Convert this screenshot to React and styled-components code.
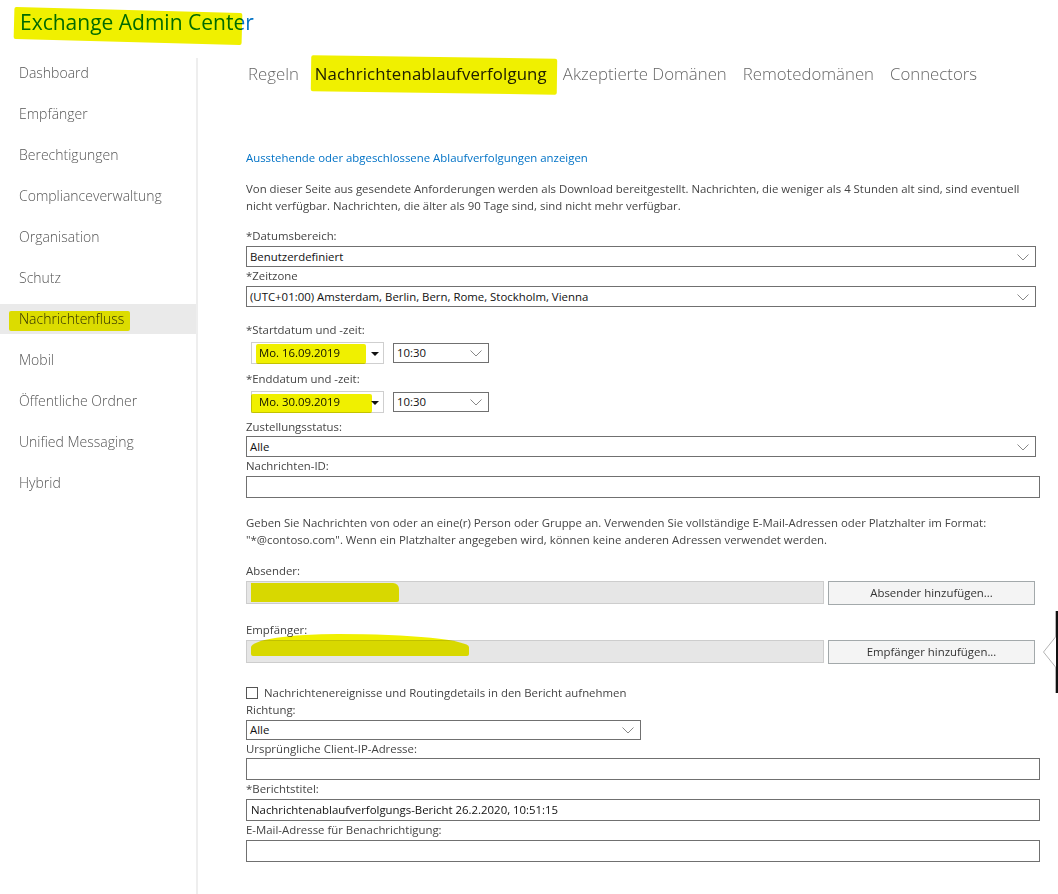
import React from "react";
import styled, { createGlobalStyle } from "styled-components";

const GlobalStyle = createGlobalStyle`
  body {
    margin: 0;
    background: #fff;
    font-family: "Segoe UI", "Open Sans", "Noto Sans", sans-serif;
    color: #333;
  }
`;

const Page = styled.div`
  width: 1058px;
  height: 894px;
  position: relative;
  overflow: hidden;
`;

const Header = styled.header`
  height: 58px;
  padding-left: 20px;
  box-sizing: border-box;
`;

const Title = styled.h1`
  margin: 0;
  padding-top: 6px;
  font-size: 21px;
  font-weight: 400;
  line-height: 32px;
  color: #0072c6;
`;

/* yellow marker stroke laid over text with multiply, like a highlighter pen */
const Marker = styled.span`
  position: relative;
  display: inline-block;

  &::after {
    content: "";
    position: absolute;
    left: ${(p) => p.$l ?? -4}px;
    right: ${(p) => p.$r ?? -4}px;
    top: ${(p) => p.$t ?? 2}px;
    bottom: ${(p) => p.$b ?? 0}px;
    background: #f0f000;
    mix-blend-mode: multiply;
    transform: rotate(${(p) => p.$tilt ?? 0}deg);
    border-radius: 2px;
    pointer-events: none;
  }
`;

const Body = styled.div`
  display: flex;
`;

const Sidebar = styled.nav`
  width: 198px;
  height: 836px;
  border-right: 2px solid #eeeeee;
  box-sizing: border-box;
`;

const NavItem = styled.div`
  height: 30px;
  line-height: 30px;
  margin-bottom: 11px;
  padding-left: 19px;
  font-size: 14px;
  font-weight: 300;
  background: ${(p) => (p.$active ? "#eaeaea" : "transparent")};
  color: ${(p) => (p.$active ? "#333" : "#555")};
`;

const Main = styled.main`
  flex: 1;
  padding-left: 48px;
  padding-right: 18px;
`;

const Tabs = styled.div`
  display: flex;
  gap: 16px;
  height: 30px;
  align-items: center;
  margin-left: 2px;
`;

const Tab = styled.div`
  font-size: 16.8px;
  font-weight: ${(p) => (p.$active ? 400 : 300)};
  letter-spacing: ${(p) => (p.$active ? "0.15px" : "0")};
  color: ${(p) => (p.$active ? "#222" : "#666")};
  white-space: nowrap;
`;

const Link = styled.a`
  display: block;
  margin-top: 61px;
  font-size: 11.4px;
  line-height: 17px;
  color: #0072c6;
  text-decoration: none;
`;

const Note = styled.p`
  margin: ${(p) => p.$top}px 0 0;
  font-size: 11.4px;
  line-height: 17px;
  color: #444;
`;

const Label = styled.div`
  margin-top: ${(p) => p.$top ?? 0}px;
  font-size: 11.4px;
  line-height: 17px;
  color: #444;
  margin-bottom: ${(p) => p.$gap ?? 2}px;
`;

const Select = styled.div`
  position: relative;
  width: ${(p) => p.$w ?? "790px"};
  height: ${(p) => p.$h ?? 21}px;
  box-sizing: border-box;
  border: 1px solid #707070;
  padding-left: 3px;
  font-size: 11.4px;
  line-height: ${(p) => (p.$h ?? 21) - 2}px;
  color: #111;
  background: #fff;
`;

const Chevron = styled.svg`
  position: absolute;
  right: 6px;
  top: 50%;
  margin-top: -3px;
`;

const TextBox = styled.div`
  width: 794px;
  height: 22px;
  box-sizing: border-box;
  border: 1px solid #707070;
  padding-left: ${(p) => p.$pad ?? 7}px;
  font-size: 11.4px;
  line-height: 20px;
  color: #111;
`;

const Row = styled.div`
  display: flex;
  align-items: center;
  height: 23px;
  gap: ${(p) => p.$gap ?? 9}px;
`;

const DateBox = styled.div`
  position: relative;
  width: 133px;
  height: 22px;
  margin-left: 5px;
  box-sizing: border-box;
  border: 1px solid #cfcfcf;
  padding-left: 7px;
  font-size: 11.4px;
  line-height: 20px;
  color: #111;
`;

const Caret = styled.span`
  position: absolute;
  right: 4px;
  top: 9px;
  width: 0;
  height: 0;
  border-left: 4px solid transparent;
  border-right: 4px solid transparent;
  border-top: 4px solid #111;
`;

const PeopleBox = styled.div`
  width: 578px;
  height: 23px;
  box-sizing: border-box;
  border: 1px solid #cdcdcd;
  background: #e6e6e6;
  padding: 2px 0 0 4px;
`;

const Blot = styled.div`
  width: ${(p) => p.$w}px;
  height: ${(p) => p.$h ?? 20}px;
  margin-top: ${(p) => p.$y ?? 0}px;
  background: #f0f000;
  mix-blend-mode: multiply;
  border-radius: ${(p) => p.$radius ?? "2px"};
`;

const Button = styled.button`
  width: 207px;
  height: 24px;
  margin-left: 4px;
  border: 1px solid #a3a9ab;
  background: #f4f4f4;
  font-family: inherit;
  font-size: 11.4px;
  color: #333;
  padding: 0;
`;

const CheckRow = styled.label`
  display: flex;
  align-items: center;
  gap: 6px;
  margin-top: 21px;
  height: 17px;
  font-size: 11.4px;
  color: #444;
`;

const Box = styled.span`
  width: 12px;
  height: 12px;
  box-sizing: border-box;
  border: 1px solid #555;
  background: #fff;
`;

const Callout = styled.div`
  position: absolute;
  left: 1043px;
  top: 611px;
  width: 15px;
  height: 82px;
`;

const ChevronDown = () => (
  <Chevron width="12" height="7" viewBox="0 0 12 7">
    <polyline points="0.5,0.5 6,6 11.5,0.5" fill="none" stroke="#888" strokeWidth="1" />
  </Chevron>
);

const NAV = [
  "Dashboard",
  "Empfänger",
  "Berechtigungen",
  "Complianceverwaltung",
  "Organisation",
  "Schutz",
  "Nachrichtenfluss",
  "Mobil",
  "Öffentliche Ordner",
  "Unified Messaging",
  "Hybrid",
];

export default function App() {
  return (
    <Page>
      <GlobalStyle />
      <Header>
        <Title>
          <Marker $l={-6} $r={12} $t={4} $b={-4} $tilt={1.5}>
            Exchange Admin Center
          </Marker>
        </Title>
      </Header>
      <Body>
        <Sidebar>
          {NAV.map((n) =>
            n === "Nachrichtenfluss" ? (
              <NavItem key={n} $active>
                <Marker $l={-10} $r={-6} $t={7} $b={3}>
                  {n}
                </Marker>
              </NavItem>
            ) : (
              <NavItem key={n}>{n}</NavItem>
            )
          )}
        </Sidebar>
        <Main>
          <Tabs>
            <Tab>Regeln</Tab>
            <Tab $active>
              <Marker $l={-4} $r={-10} $t={-5} $b={-8} $tilt={0.8}>
                Nachrichtenablaufverfolgung
              </Marker>
            </Tab>
            <Tab>Akzeptierte Domänen</Tab>
            <Tab>Remotedomänen</Tab>
            <Tab>Connectors</Tab>
          </Tabs>

          <Link href="#">Ausstehende oder abgeschlossene Ablaufverfolgungen anzeigen</Link>

          <Note $top={14}>
            Von dieser Seite aus gesendete Anforderungen werden als Download bereitgestellt. Nachrichten, die weniger
            als 4 Stunden alt sind, sind eventuell
            <br />
            nicht verfügbar. Nachrichten, die älter als 90 Tage sind, sind nicht mehr verfügbar.
          </Note>

          <Label $top={13}>*Datumsbereich:</Label>
          <Select>
            Benutzerdefiniert
            <ChevronDown />
          </Select>
          <Label $gap={2}>*Zeitzone</Label>
          <Select>
            (UTC+01:00) Amsterdam, Berlin, Bern, Rome, Stockholm, Vienna
            <ChevronDown />
          </Select>

          <Label $top={14} $gap={3}>*Startdatum und -zeit:</Label>
          <Row>
            <DateBox>
              <Marker $l={-3} $r={-26} $t={1} $b={-1}>
                Mo. 16.09.2019
              </Marker>
              <Caret />
            </DateBox>
            <Select $w="96px" $h={20}>
              10:30
              <ChevronDown />
            </Select>
          </Row>
          <Label $top={6} $gap={3}>*Enddatum und -zeit:</Label>
          <Row>
            <DateBox>
              <Marker $l={-8} $r={-32} $t={2} $b={-1}>
                Mo. 30.09.2019
              </Marker>
              <Caret />
            </DateBox>
            <Select $w="96px" $h={20}>
              10:30
              <ChevronDown />
            </Select>
          </Row>

          <Label $top={5} $gap={1}>Zustellungsstatus:</Label>
          <Select>
            Alle
            <ChevronDown />
          </Select>
          <Label>Nachrichten-ID:</Label>
          <TextBox />

          <Note $top={16}>
            Geben Sie Nachrichten von oder an eine(r) Person oder Gruppe an. Verwenden Sie vollständige E-Mail-Adressen
            oder Platzhalter im Format:
            <br />
            "*@contoso.com". Wenn ein Platzhalter angegeben wird, können keine anderen Adressen verwendet werden.
          </Note>

          <Label $top={14}>Absender:</Label>
          <Row $gap={0}>
            <PeopleBox>
              <Blot $w={148} $h={19} $y={-1} $radius="0 6px 2px 0" />
            </PeopleBox>
            <Button>Absender hinzufügen...</Button>
          </Row>

          <Label $top={17}>Empfänger:</Label>
          <Row $gap={0}>
            <PeopleBox>
              <Blot $w={218} $h={22} $y={-9} $radius="40% 60% 2px 2px / 60% 60% 2px 2px" />
            </PeopleBox>
            <Button>Empfänger hinzufügen...</Button>
          </Row>

          <CheckRow>
            <Box />
            Nachrichtenereignisse und Routingdetails in den Bericht aufnehmen
          </CheckRow>
          <Label>Richtung:</Label>
          <Select $w="395px" $h={20}>
            Alle
            <ChevronDown />
          </Select>
          <Label $gap={1}>Ursprüngliche Client-IP-Adresse:</Label>
          <TextBox />
          <Label $gap={2}>*Berichtstitel:</Label>
          <TextBox $pad={4}>Nachrichtenablaufverfolgungs-Bericht 26.2.2020, 10:51:15</TextBox>
          <Label $gap={2}>E-Mail-Adresse für Benachrichtigung:</Label>
          <TextBox />
        </Main>
      </Body>

      <Callout>
        <svg width="15" height="82" viewBox="0 0 15 82">
          <path d="M12.5 0 V26 L0.5 41 L12.5 56 V82" fill="#fff" stroke="#b5b5b5" strokeWidth="1" />
          <rect x="13" y="0" width="2" height="82" fill="#111" />
        </svg>
      </Callout>
    </Page>
  );
}
